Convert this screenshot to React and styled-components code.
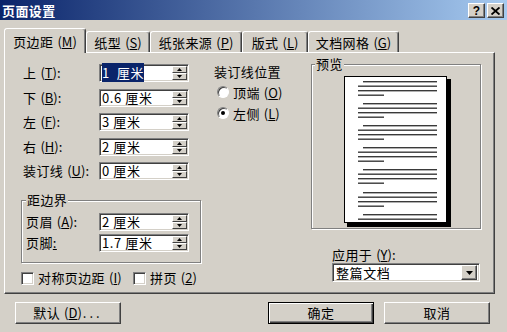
import React from 'react';
import styled, { createGlobalStyle } from 'styled-components';

const GlobalStyle = createGlobalStyle`
  html, body { margin: 0; padding: 0; background: #d4d0c8; }
  body {
    font-family: "Noto Sans CJK SC", "Liberation Sans", sans-serif;
    font-size: 13px;
    letter-spacing: 0.4px;
    color: #000;
  }
`;

const Window = styled.div`
  width: 507px;
  height: 332px;
  background: #d4d0c8;
  overflow: hidden;
  display: flex;
  flex-direction: column;
`;

const TitleBar = styled.div`
  height: 20px;
  flex: none;
  background: linear-gradient(to right, #0a246a, #a6caf0);
  display: flex;
  align-items: center;
  padding: 1px 3px 0 2px;
  box-sizing: border-box;
`;

const Title = styled.div`
  flex: 1;
  color: #fff;
  font-weight: bold;
  font-size: 13px;
  line-height: 16px;
`;

const CaptionButton = styled.div`
  box-sizing: border-box;
  width: 17px;
  height: 15px;
  margin-left: 2px;
  background: #d4d0c8;
  border: 1px solid;
  border-color: #fff #404040 #404040 #fff;
  box-shadow: inset -1px -1px 0 #808080;
  display: flex;
  align-items: center;
  justify-content: center;
  font: bold 12px "Liberation Sans", sans-serif;
  line-height: 1;
`;

const TabRow = styled.div`
  display: flex;
  align-items: flex-end;
  height: 24px;
  margin-top: 8px;
  padding-left: 4px;
  position: relative;
  z-index: 1;
`;

const Tab = styled.div`
  box-sizing: border-box;
  width: ${p => p.$w}px;
  height: ${p => (p.$active ? 25 : 21)}px;
  margin-bottom: ${p => (p.$active ? -1 : 0)}px;
  padding-top: ${p => (p.$active ? 2 : 1)}px;
  background: #d4d0c8;
  border: 1px solid;
  border-bottom: none;
  border-color: #fff #404040 transparent #fff;
  box-shadow: inset -1px 0 0 #808080;
  border-radius: 3px 3px 0 0;
  display: flex;
  align-items: center;
  justify-content: center;
  line-height: 16px;
  white-space: nowrap;
`;

const Acc = styled.span`
  margin-left: 4px;
  letter-spacing: 0;
`;

const Key = styled.u`
  text-decoration: underline;
  text-underline-offset: 1px;
`;

const Panel = styled.div`
  box-sizing: border-box;
  width: 491px;
  height: 242px;
  margin-left: 4px;
  border: 1px solid;
  border-color: #fff #404040 #404040 #fff;
  box-shadow: inset -1px -1px 0 #808080;
  display: flex;
  padding: 3px 0 0 16px;
`;

const LeftCol = styled.div`
  width: 180px;
  padding-top: 8px;
  display: flex;
  flex-direction: column;
`;

const MidCol = styled.div`
  width: 99px;
  margin-left: 11px;
  padding-top: 8px;
  display: flex;
  flex-direction: column;
`;

const RightCol = styled.div`
  width: 170px;
  display: flex;
  flex-direction: column;
`;

const FieldRow = styled.div`
  display: flex;
  align-items: center;
  height: 18px;
  padding-left: ${p => p.$indent || 0}px;
  margin-top: ${p => p.$gap || 0}px;
`;

const Label = styled.div`
  width: ${p => p.$w}px;
  flex: none;
  line-height: 16px;
  white-space: nowrap;
`;

const SpinBox = styled.div`
  box-sizing: border-box;
  width: 90px;
  height: 18px;
  background: #fff;
  border: 1px solid;
  border-color: #808080 #fff #fff #808080;
  box-shadow: inset 1px 1px 0 #404040, inset -1px -1px 0 #d4d0c8;
  display: flex;
  align-items: center;
  padding: 1px 1px 1px 2px;
`;

const Value = styled.div`
  flex: 1;
  line-height: 14px;
  white-space: pre;
  letter-spacing: 0.6px;
`;

const Selected = styled.span`
  background: #0a246a;
  color: #fff;
`;

const SpinButtons = styled.div`
  width: 15px;
  height: 14px;
  display: flex;
  flex-direction: column;
`;

const SpinBtn = styled.div`
  box-sizing: border-box;
  flex: 1;
  background: #d4d0c8;
  border: 1px solid;
  border-color: #fff #404040 #404040 #fff;
  display: flex;
  align-items: center;
  justify-content: center;
`;

const Group = styled.fieldset`
  margin: ${p => p.$mt || 0}px 0 0;
  padding: ${p => p.$pad};
  min-width: 0;
  border: 1px solid #808080;
  box-shadow: inset 1px 1px 0 #fff, 1px 1px 0 #fff;
`;

const Legend = styled.legend`
  padding: 0 1px;
  line-height: 16px;
  background: #d4d0c8;
`;

const CheckRow = styled.div`
  display: flex;
  align-items: center;
  height: 16px;
  margin-top: 7px;
`;

const CheckItem = styled.div`
  display: flex;
  align-items: center;
  width: ${p => p.$w}px;
  flex: none;
  white-space: nowrap;
  line-height: 16px;
`;

const Box = styled.div`
  box-sizing: border-box;
  width: 13px;
  height: 13px;
  flex: none;
  margin-right: 4px;
  background: #fff;
  border: 1px solid;
  border-color: #808080 #fff #fff #808080;
  box-shadow: inset 1px 1px 0 #404040, inset -1px -1px 0 #d4d0c8;
`;

const SectionTitle = styled.div`
  line-height: 16px;
  padding-left: 2px;
  white-space: nowrap;
`;

const RadioRow = styled.div`
  display: flex;
  align-items: center;
  height: 16px;
  margin-top: ${p => p.$gap}px;
  padding-left: 5px;
  white-space: nowrap;
`;

const Radio = styled.div`
  box-sizing: border-box;
  width: 12px;
  height: 12px;
  margin-right: 4px;
  border-radius: 50%;
  background: #fff;
  border: 1px solid;
  border-color: #808080 #fff #fff #808080;
  box-shadow: inset 1px 1px 0 #404040;
  display: flex;
  align-items: center;
  justify-content: center;

  &::after {
    content: '';
    width: 4px;
    height: 4px;
    border-radius: 50%;
    background: ${p => (p.$checked ? '#000' : 'transparent')};
  }
`;

const PreviewBody = styled.div`
  padding: 4px 0 1px 29px;
  line-height: 0;
`;

const ApplyLabel = styled.div`
  margin-top: 18px;
  padding-left: 21px;
  line-height: 16px;
`;

const Select = styled.div`
  box-sizing: border-box;
  width: 148px;
  height: 19px;
  margin-left: 21px;
  background: #fff;
  border: 1px solid;
  border-color: #808080 #fff #fff #808080;
  box-shadow: inset 1px 1px 0 #404040, inset -1px -1px 0 #d4d0c8;
  display: flex;
  align-items: center;
  padding: 2px 2px 2px 3px;
`;

const DropBtn = styled.div`
  box-sizing: border-box;
  width: 16px;
  height: 15px;
  background: #d4d0c8;
  border: 1px solid;
  border-color: #fff #404040 #404040 #fff;
  box-shadow: inset -1px -1px 0 #808080;
  display: flex;
  align-items: center;
  justify-content: center;
`;

const ButtonRow = styled.div`
  display: flex;
  align-items: center;
  margin-top: 8px;
  padding: 0 17px 0 15px;
`;

const Spacer = styled.div`
  flex: 1;
`;

const Button = styled.div`
  box-sizing: border-box;
  width: 106px;
  height: 22px;
  margin-left: ${p => p.$ml || 0}px;
  border: 1px solid;
  border-color: ${p => (p.$default ? '#000' : '#fff #404040 #404040 #fff')};
  box-shadow: ${p =>
    p.$default
      ? 'inset 1px 1px 0 #fff, inset -1px -1px 0 #404040, inset -2px -2px 0 #808080'
      : 'inset -1px -1px 0 #808080'};
  display: flex;
  align-items: center;
  justify-content: center;
  line-height: 16px;
  white-space: nowrap;
`;

const Dots = styled.span`
  letter-spacing: 3px;
  margin-left: 1px;
`;

const Arrow = ({ up, w = 5, h = 3 }) => (
  <svg width={w} height={h} viewBox={`0 0 ${w} ${h}`}>
    <polygon
      points={up ? `${w / 2},0 ${w},${h} 0,${h}` : `0,0 ${w},0 ${w / 2},${h}`}
      fill="#000"
    />
  </svg>
);

const Spin = ({ children }) => (
  <SpinBox>
    <Value>{children}</Value>
    <SpinButtons>
      <SpinBtn><Arrow up /></SpinBtn>
      <SpinBtn><Arrow /></SpinBtn>
    </SpinButtons>
  </SpinBox>
);

const Accel = ({ k }) => (
  <Acc>(<Key>{k}</Key>)</Acc>
);

const PagePreview = () => {
  const groups = [5, 27, 49, 71, 93, 116, 138];
  const lines = [];
  groups.forEach(g => {
    [
      [0, 19, 93],
      [4.5, 14, 93],
      [9, 14, 93],
      [13.5, 14, 40],
    ].forEach(([dy, x1, x2]) => {
      const y = g + dy;
      if (y < 144) lines.push(<rect key={y} x={x1} y={y} width={x2 - x1} height="1.4" fill="#3a3a3a" />);
    });
  });
  return (
    <svg width="107" height="151" viewBox="0 0 107 151">
      <rect x="3" y="3" width="104" height="148" fill="#000" />
      <rect x="0.5" y="0.5" width="102" height="146" fill="#fff" stroke="#000" />
      {lines}
    </svg>
  );
};

const rows = [
  ['上', 'T', <Selected key="s">1  厘米</Selected>],
  ['下', 'B', '0.6 厘米'],
  ['左', 'F', '3 厘米'],
  ['右', 'H', '2 厘米'],
  ['装订线', 'U', '0 厘米'],
];

const tabs = [
  ['页边距', 'M', 82, true],
  ['纸型', 'S', 64],
  ['纸张来源', 'P', 92],
  ['版式', 'L', 66],
  ['文档网格', 'G', 91],
];

export default function App() {
  return (
    <Window>
      <GlobalStyle />
      <TitleBar>
        <Title>页面设置</Title>
        <CaptionButton>?</CaptionButton>
        <CaptionButton>
          <svg width="9" height="8" viewBox="0 0 9 8">
            <path d="M0.5 0.5 L8.5 7.5 M8.5 0.5 L0.5 7.5" stroke="#000" strokeWidth="1.9" />
          </svg>
        </CaptionButton>
      </TitleBar>

      <TabRow>
        {tabs.map(([name, key, w, active]) => (
          <Tab key={name} $w={w} $active={active}>
            {name}<Accel k={key} />
          </Tab>
        ))}
      </TabRow>

      <Panel>
        <LeftCol>
          {rows.map(([name, key, val], i) => (
            <FieldRow key={name} $indent={2} $gap={i ? 6.5 : 0}>
              <Label $w={76}>{name}<Accel k={key} />:</Label>
              <Spin>{val}</Spin>
            </FieldRow>
          ))}

          <Group $mt={12} $pad="5px 0 10px 4px">
            <Legend>距边界</Legend>
            <FieldRow>
              <Label $w={73}>页眉<Accel k="A" />:</Label>
              <Spin>2 厘米</Spin>
            </FieldRow>
            <FieldRow $gap={3}>
              <Label $w={73}>页脚<Key>:</Key></Label>
              <Spin>1.7 厘米</Spin>
            </FieldRow>
          </Group>

          <CheckRow>
            <CheckItem $w={112}>
              <Box />
              对称页边距<Accel k="I" />
            </CheckItem>
            <CheckItem $w={70}>
              <Box />
              拼页<Accel k="2" />
            </CheckItem>
          </CheckRow>
        </LeftCol>

        <MidCol>
          <SectionTitle>装订线位置</SectionTitle>
          <RadioRow $gap={4}>
            <Radio />
            顶端<Accel k="O" />
          </RadioRow>
          <RadioRow $gap={5}>
            <Radio $checked />
            左侧<Accel k="L" />
          </RadioRow>
        </MidCol>

        <RightCol>
          <Group $pad="0 0 0 3px">
            <Legend>预览</Legend>
            <PreviewBody>
              <PagePreview />
            </PreviewBody>
          </Group>
          <ApplyLabel>应用于<Accel k="Y" />:</ApplyLabel>
          <Select>
            <Value>整篇文档</Value>
            <DropBtn><Arrow w={7} h={4} /></DropBtn>
          </Select>
        </RightCol>
      </Panel>

      <ButtonRow>
        <Button>默认<Accel k="D" /><Dots>...</Dots></Button>
        <Spacer />
        <Button $default>确定</Button>
        <Button $ml={10}>取消</Button>
      </ButtonRow>
    </Window>
  );
}
